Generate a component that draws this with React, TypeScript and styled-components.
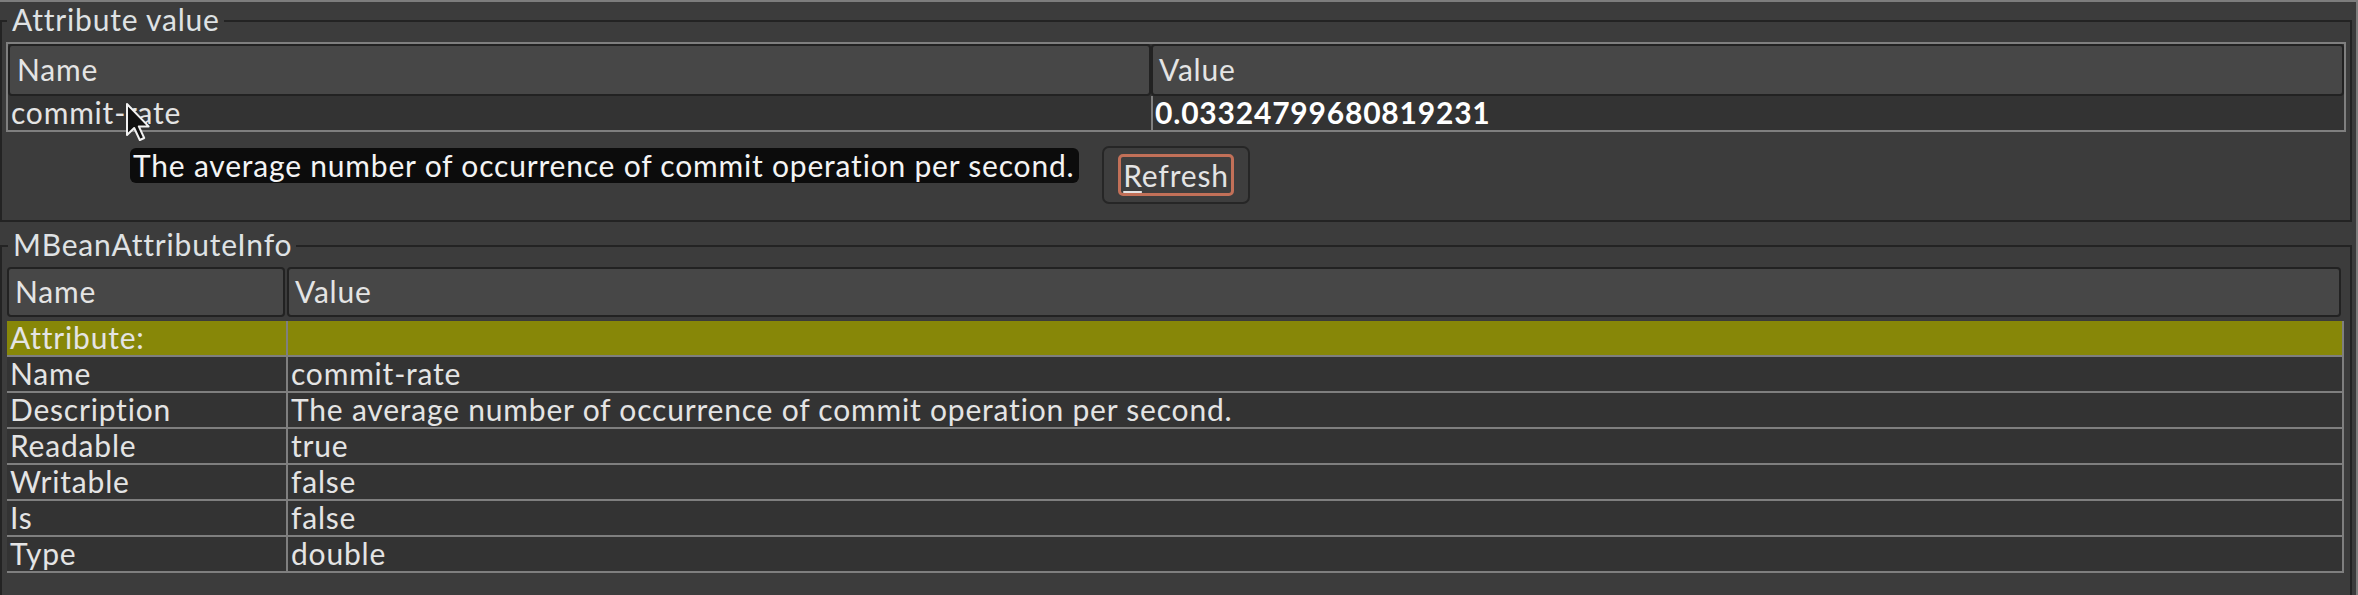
import React from 'react';
import styled, { createGlobalStyle } from 'styled-components';

const GlobalStyle = createGlobalStyle`
  html, body {
    margin: 0;
    padding: 0;
    background: #3c3c3c;
  }
  body {
    font-family: Lato, "Liberation Sans", sans-serif;
    overflow: hidden;
  }
`;

const Window = styled.div`
  position: relative;
  width: 2358px;
  height: 595px;
  box-sizing: border-box;
  border-top: 2px solid #7d7d7d;
  border-right: 2px solid #7d7d7d;
  padding-right: 4px;
  background: #3c3c3c;
  color: #e4e4e4;
  font-size: 30px;
  letter-spacing: 0.8px;
  overflow: hidden;
  display: flex;
  flex-direction: column;
`;

const Group = styled.fieldset<{ $top: number; $grow?: boolean }>`
  margin: ${p => p.$top}px 0 0 0;
  padding: ${p => (p.$grow ? '4px 6px 60px 5px' : '4px 4px 16px 4px')};
  border: 2px solid #232323;
  min-width: 0;
  flex: ${p => (p.$grow ? '1 0 auto' : '0 0 auto')};
`;

const Legend = styled.legend`
  margin-left: 1px;
  padding: 0 4px 4px 5px;
  line-height: 30px;
  font-size: 30px;
  color: #dfe2e4;
`;

/* ---- attribute value table ---- */

const ValueTable = styled.div`
  border: 2px solid #7f7f7f;
  background: #333333;
`;

const HeaderRow = styled.div<{ $cols: string; $gap?: number; $trail?: number }>`
  display: grid;
  grid-template-columns: ${p => p.$cols};
  column-gap: ${p => p.$gap ?? 0}px;
  margin-right: ${p => p.$trail ?? 0}px;
`;

const HeaderCell = styled.div<{ $h: number; $pad?: number }>`
  height: ${p => p.$h}px;
  box-sizing: border-box;
  border: 2px solid #222222;
  border-radius: 4px;
  background: #474747;
  padding-left: ${p => p.$pad ?? 6}px;
  line-height: ${p => p.$h - 5}px;
  white-space: nowrap;
`;

const DataRow = styled.div<{ $cols: string }>`
  display: grid;
  grid-template-columns: ${p => p.$cols};
  height: 34px;
  line-height: 33px;
`;

const DataCell = styled.div<{ $bold?: boolean; $divider?: boolean }>`
  padding-left: ${p => (p.$divider ? 2 : 3)}px;
  border-left: ${p => (p.$divider ? '2px solid #7f7f7f' : 'none')};
  font-weight: ${p => (p.$bold ? 700 : 400)};
  white-space: nowrap;
  color: ${p => (p.$bold ? '#ffffff' : 'inherit')};
`;

const ButtonRow = styled.div`
  display: flex;
  justify-content: center;
  padding-top: 14px;
`;

const Button = styled.button`
  box-sizing: border-box;
  height: 58px;
  padding: 5px 14px;
  border: 2px solid #262626;
  border-radius: 7px;
  background: #3e3e3e;
  color: #e4e4e4;
  font: inherit;
  letter-spacing: inherit;
  cursor: pointer;
`;

const FocusRing = styled.span`
  display: block;
  border: 3px solid #c27058;
  border-radius: 5px;
  padding: 0 2px;
  line-height: 36px;
`;

const Mnemonic = styled.span`
  text-decoration: underline;
  text-underline-offset: 4px;
  text-decoration-thickness: 2px;
`;

/* ---- info table ---- */

const InfoTable = styled.div``;

const InfoRow = styled.div<{ $highlight?: boolean }>`
  display: grid;
  grid-template-columns: 279px 1fr;
  height: 36px;
  box-sizing: border-box;
  line-height: 33px;
  border-bottom: 2px solid #7f7f7f;
  border-right: 2px solid #7f7f7f;
  background: ${p => (p.$highlight ? '#878708' : '#333333')};
`;

const InfoCell = styled.div<{ $value?: boolean }>`
  padding-left: 3px;
  border-left: ${p => (p.$value ? '2px solid #7f7f7f' : 'none')};
  white-space: nowrap;
`;

/* ---- overlays ---- */

const Tooltip = styled.div`
  position: absolute;
  left: 130px;
  top: 146px;
  width: 949px;
  height: 35px;
  box-sizing: border-box;
  padding-left: 3px;
  border-radius: 6px;
  background: #0c0c0c;
  color: #f4f4f4;
  line-height: 34px;
  white-space: nowrap;
`;

const Pointer = styled.svg`
  position: absolute;
  left: 125px;
  top: 100px;
`;

const description = 'The average number of occurrence of commit operation per second.';

const infoRows: [string, string][] = [
  ['Name', 'commit-rate'],
  ['Description', description],
  ['Readable', 'true'],
  ['Writable', 'false'],
  ['Is', 'false'],
  ['Type', 'double'],
];

const App: React.FC = () => {
  return (
    <Window>
      <GlobalStyle />
      <Group $top={2}>
        <Legend>Attribute value</Legend>
        <ValueTable>
          <HeaderRow $cols="1143px 1fr">
            <HeaderCell $h={52} $pad={7}>Name</HeaderCell>
            <HeaderCell $h={52}>Value</HeaderCell>
          </HeaderRow>
          <DataRow $cols="1143px 1fr">
            <DataCell>commit-rate</DataCell>
            <DataCell $divider $bold>0.03324799680819231</DataCell>
          </DataRow>
        </ValueTable>
        <ButtonRow>
          <Button>
            <FocusRing>
              <Mnemonic>R</Mnemonic>efresh
            </FocusRing>
          </Button>
        </ButtonRow>
      </Group>

      <Group $top={7} $grow>
        <Legend>MBeanAttributeInfo</Legend>
        <HeaderRow $cols="278px 1fr" $gap={2} $trail={3} style={{ marginBottom: 4 }}>
          <HeaderCell $h={50}>Name</HeaderCell>
          <HeaderCell $h={50}>Value</HeaderCell>
        </HeaderRow>
        <InfoTable>
          <InfoRow $highlight>
            <InfoCell>Attribute:</InfoCell>
            <InfoCell $value />
          </InfoRow>
          {infoRows.map(([name, value]) => (
            <InfoRow key={name}>
              <InfoCell>{name}</InfoCell>
              <InfoCell $value>{value}</InfoCell>
            </InfoRow>
          ))}
        </InfoTable>
      </Group>

      <Tooltip>{description}</Tooltip>
      <Pointer width="26" height="40" viewBox="0 0 13 20">
        <path
          d="M1 1 L1 16.5 L4.6 13 L7.4 19 L9.6 18 L6.9 12.2 L11.8 12.2 Z"
          fill="#111"
          stroke="#f2f2f2"
          strokeWidth="1"
          strokeLinejoin="round"
        />
      </Pointer>
    </Window>
  );
};

export default App;
